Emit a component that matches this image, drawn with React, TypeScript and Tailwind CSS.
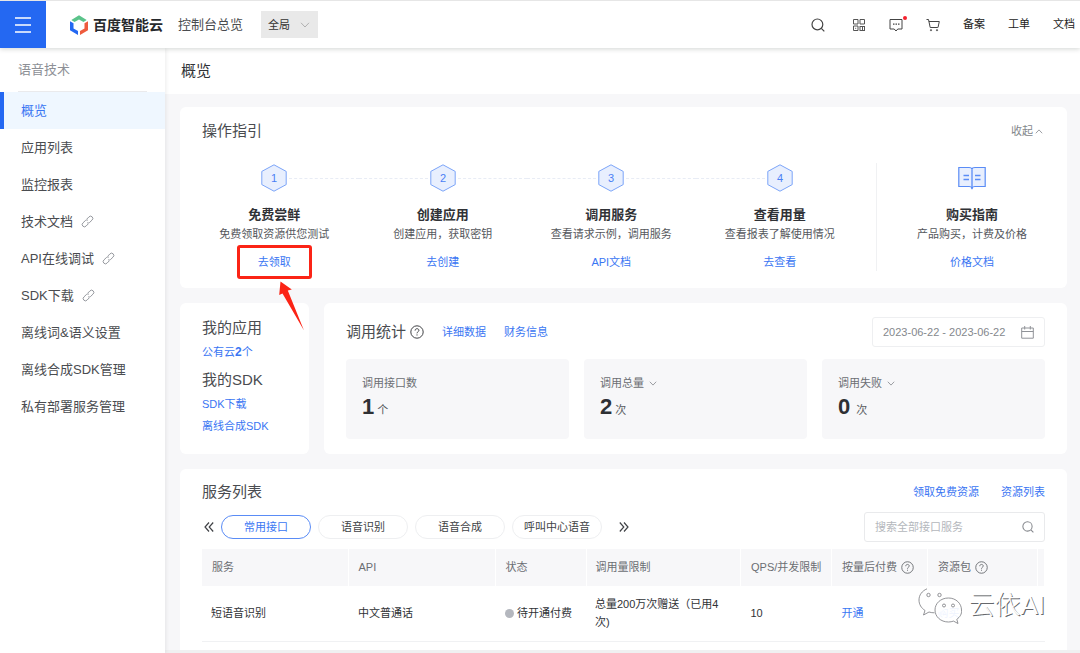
import React from "react";

type Step = { n: number; title: string; desc: string; link: string; highlight?: boolean };

const steps: Step[] = [
  { n: 1, title: "免费尝鲜", desc: "免费领取资源供您测试", link: "去领取", highlight: true },
  { n: 2, title: "创建应用", desc: "创建应用，获取密钥", link: "去创建" },
  { n: 3, title: "调用服务", desc: "查看请求示例，调用服务", link: "API文档" },
  { n: 4, title: "查看用量", desc: "查看报表了解使用情况", link: "去查看" },
];

const menu = [
  { label: "概览", active: true },
  { label: "应用列表" },
  { label: "监控报表" },
  { label: "技术文档", external: true },
  { label: "API在线调试", external: true },
  { label: "SDK下载", external: true },
  { label: "离线词&语义设置" },
  { label: "离线合成SDK管理" },
  { label: "私有部署服务管理" },
];

const tabs = ["常用接口", "语音识别", "语音合成", "呼叫中心语音"];

function Chevron({ up = false, className = "" }: { up?: boolean; className?: string }) {
  return (
    <svg viewBox="0 0 10 6" className={className} fill="none" stroke="currentColor" strokeWidth="1" aria-hidden="true">
      <path d={up ? "M1 5.2 5 1l4 4.2" : "M1 .8 5 5 9 .8"} />
    </svg>
  );
}

function Search({ className = "" }: { className?: string }) {
  return (
    <svg viewBox="0 0 14 14" className={className} fill="none" stroke="currentColor" strokeWidth="1.2" aria-hidden="true">
      <circle cx="6.4" cy="6.4" r="5.4" />
      <path d="m10.3 10.3 3 3" />
    </svg>
  );
}

function Help({ className = "" }: { className?: string }) {
  return (
    <svg viewBox="0 0 14 14" className={className} fill="none" stroke="currentColor" aria-hidden="true">
      <circle cx="7" cy="7" r="6.2" />
      <path d="M5.1 5.6C5.1 4.4 5.9 3.7 7 3.7s1.9.7 1.9 1.7C8.9 6.7 7 6.8 7 8.3" />
      <path d="M7 9.4v1.1" />
    </svg>
  );
}

function LinkIcon() {
  return (
    <svg viewBox="0 0 14 14" className="size-[13px] text-[#8d9096]" fill="none" stroke="currentColor" strokeLinecap="round" aria-hidden="true">
      <path d="M6.4 4.2 8.6 2a2.4 2.4 0 0 1 3.4 0 2.4 2.4 0 0 1 0 3.4L9.3 8a2.3 2.3 0 0 1-2.3.6" />
      <path d="M7.6 9.8 5.4 12A2.4 2.4 0 0 1 2 12a2.4 2.4 0 0 1 0-3.4L4.7 6A2.3 2.3 0 0 1 7 5.4" />
    </svg>
  );
}

function Header() {
  return (
    <header className="relative z-20 flex h-12 items-center border-t border-[#e6e6e6] bg-white shadow-[0_1px_5px_rgba(0,20,10,0.18)]">
      <button type="button" aria-label="菜单" className="flex h-full w-[46px] shrink-0 items-center justify-center bg-[#2468f2] text-white">
        <svg viewBox="0 0 16 16" className="size-4" stroke="currentColor" strokeWidth="1.7" aria-hidden="true">
          <path d="M0 1h16M0 8h16M0 15h16" />
        </svg>
      </button>
      <a href="#home" className="ml-6 flex shrink-0 items-center gap-[5px] text-sm font-bold text-[#26282c]">
        <svg viewBox="0 0 18 20" className="h-5 w-[18px]" aria-hidden="true">
          <path d="M1.3 4.9 9 .3l7.7 4.6-3.2 2L9 4.4 4.5 6.900z" fill="#5ac38a" />
          <path d="M0 6.2 3.5 8.3v5.2L8 16v4L0 15.200z" fill="#2468f2" />
          <path d="m18 6.2-3.5 2.1v5.2L10 16v4l8-4.800z" fill="#ee5b3d" />
        </svg>
        <span>百度智能云</span>
      </a>
      <a href="#console" className="ml-[15px] shrink-0 text-[13px] text-[#4a4c50]">控制台总览</a>
      <label className="relative ml-[18px] shrink-0">
        <span className="sr-only">区域</span>
        <select className="block h-[27px] w-[57px] appearance-none bg-[#e9e9e9] pl-[7px] text-[11px] leading-[18px] text-[#333]">
          <option>全局</option>
        </select>
        <Chevron className="pointer-events-none absolute top-[11px] right-2 h-[6px] w-[10px] text-[#b0b0b0]" />
      </label>
      <nav className="ml-auto flex shrink-0 items-center gap-[23px] pr-[5px] text-[11px] text-[#222]">
        <button type="button" aria-label="搜索" className="mr-1">
          <Search className="block size-[14px] text-[#444]" />
        </button>
        <button type="button" aria-label="应用">
          <svg viewBox="0 0 14 14" className="block size-[14px] text-[#555]" fill="none" stroke="currentColor" aria-hidden="true">
            <path d="M1.5 1.5h4.5v4.5h-4.5zM8 1.5h4.5v4.5H8zM1.5 8h4.5v4.5h-4.5zM8 8v5M8 8.5h5M10.5 8.5v4.5M12.5 8.5v4.5M8 12.5h5M3.2 10.3h1" />
          </svg>
        </button>
        <button type="button" aria-label="消息" className="relative">
          <svg viewBox="0 0 14 14" className="block size-[14px] text-[#444]" fill="none" stroke="currentColor" aria-hidden="true">
            <path d="M1 1.5h12v9.5H8.8l-1.8 2-1.800-2H1z" />
            <path d="M4 6.2h1.5M6.5 6.2H8M9 6.2h1.5" strokeWidth="1.3" />
          </svg>
          <span className="absolute -top-[2px] -right-[4px] size-1 rounded-full bg-[#f5222d]" />
        </button>
        <button type="button" aria-label="购物车">
          <svg viewBox="0 0 14 14" className="block size-[14px] text-[#444]" fill="none" stroke="currentColor" aria-hidden="true">
            <path d="M.5 1.5h2l1.7 8h7.6M2.900 3.500h10.400l-1.300 6" />
            <circle cx="5" cy="12.2" r=".6" />
            <circle cx="11" cy="12.2" r=".6" />
          </svg>
        </button>
        <a href="#beian">备案</a>
        <a href="#ticket">工单</a>
        <a href="#docs">文档</a>
      </nav>
    </header>
  );
}

function Sidebar() {
  return (
    <aside className="relative z-10 w-[165px] shrink-0 bg-white text-[13px] text-[#4a4c50] shadow-[1px_0_4px_rgba(0,0,0,0.08)]">
      <div className="mx-[18px] flex h-11 items-center border-b border-[#eaeaec] text-[#8d9096]">语音技术</div>
      <nav>
        {menu.map((m) => (
          <a
            key={m.label}
            href="#menu"
            className={
              m.active
                ? "flex h-[37px] items-center border-l-4 border-[#2468f2] bg-[#eff7ff] pl-[17px] text-[#3a76f3]"
                : "flex h-[37px] items-center gap-2 pl-[21px]"
            }
          >
            <span>{m.label}</span>
            {m.external && <LinkIcon />}
          </a>
        ))}
      </nav>
    </aside>
  );
}

function Guide() {
  return (
    <section className="rounded-md bg-white pt-3 pb-[17px]">
      <div className="flex items-center justify-between pr-6 pl-[22px]">
        <h2 className="text-[15px] leading-6 text-[#4a4c50]">操作指引</h2>
        <button type="button" className="flex items-center gap-[2px] text-[11px] text-[#84878c]">
          收起
          <Chevron up className="h-[5px] w-2" />
        </button>
      </div>
      <div className="mt-5 flex text-center text-[11px] leading-[18px]">
        <ol className="grid flex-1 grid-cols-4 pt-px pr-3 pl-[10px]">
          {steps.map((s, i) => (
            <li key={s.n}>
              <div className="flex items-center gap-[2px]">
                <span className={i === 0 ? "flex-1" : "flex-1 border-t border-dashed border-[#e8ecf5]"} />
                <svg viewBox="0 0 26 28" className="h-7 w-[26px]" aria-hidden="true">
                  <path d="M13 .8 25.2 7.4v13.2L13 27.2.8 20.6V7.400z" fill="#e8effe" stroke="#7ba4f8" />
                  <text x="13" y="18" textAnchor="middle" fontSize="11" fill="#4a7ff5">{s.n}</text>
                </svg>
                <span className={i === steps.length - 1 ? "flex-1" : "flex-1 border-t border-dashed border-[#e8ecf5]"} />
              </div>
              <h3 className="mt-[13px] text-[13px] leading-5 font-bold text-[#303236]">{s.title}</h3>
              <p className="text-[#55575c]">{s.desc}</p>
              <div className="relative mx-auto mt-[10px] w-fit">
                <a href="#step" className="text-[#3a76f3]">{s.link}</a>
                {s.highlight && (
                  <>
                    <span className="pointer-events-none absolute -inset-x-[21px] -inset-y-2 rounded-[3px] border-[3px] border-[#fb2416]" />
                    <svg viewBox="0 0 28 54" className="pointer-events-none absolute top-[27px] left-5 z-10 h-[54px] w-7" aria-hidden="true">
                      <path d="M2.5 1.5 13.8 9.5 9.8 10.5 26 50.5 4.5 13.5 1.2 15z" fill="#fb2416" />
                    </svg>
                  </>
                )}
              </div>
            </li>
          ))}
        </ol>
        <div className="w-[191px] border-l border-[#f0f1f3] pt-px">
          <div className="flex h-7 items-center justify-center">
            <svg viewBox="0 0 28 24" className="h-6 w-7" fill="#e8effe" stroke="#5a8cf6" aria-hidden="true">
              <path d="M.8 1.500H11q3 0 3 2 0-2 3-2h10.200v19H17q-2.500 0-3 1.500-.5-1.500-3-1.500H.8z" strokeWidth="1.2" />
              <path d="M14 3.500V23M5.500 9.500H11M5.500 13.500H11M17 9.500h5.500M17 13.500h5.500" strokeWidth="1.3" />
            </svg>
          </div>
          <h3 className="mt-[13px] text-[13px] leading-5 font-bold text-[#303236]">购买指南</h3>
          <p className="text-[#55575c]">产品购买，计费及价格</p>
          <a href="#price" className="mt-[10px] inline-block text-[#3a76f3]">价格文档</a>
        </div>
      </div>
    </section>
  );
}

function MyApps() {
  return (
    <section className="w-[129px] shrink-0 rounded-md bg-white px-[22px] pt-[13px] pb-4 text-[11px] leading-[22px] text-[#3a76f3]">
      <h2 className="text-[15px] leading-6 text-[#4a4c50]">我的应用</h2>
      <a href="#apps" className="block pt-px">公有云<b className="text-xs">2</b>个</a>
      <h2 className="mt-[5px] text-[15px] leading-6 text-[#4a4c50]">我的SDK</h2>
      <a href="#sdk" className="block pt-px">SDK下载</a>
      <a href="#offline" className="block">离线合成SDK</a>
    </section>
  );
}

function Stat({ label, value, unit, menu: hasMenu = false, spaced = false }: { label: string; value: string; unit: string; menu?: boolean; spaced?: boolean }) {
  return (
    <div className="h-20 flex-1 rounded-sm bg-[#f7f7f9] px-4 pt-[15px]">
      <div className="flex items-center gap-[5px] text-[11px] leading-[18px] text-[#6b6e73]">
        {label}
        {hasMenu && <Chevron className="h-[5px] w-2 text-[#84878c]" />}
      </div>
      <div className={spaced ? "flex items-baseline gap-[6px]" : "flex items-baseline gap-[3px]"}>
        <strong className="text-[22px] leading-[30px] text-[#2e3034]">{value}</strong>
        <span className="text-[11px] text-[#55575c]">{unit}</span>
      </div>
    </div>
  );
}

function Stats() {
  return (
    <section className="flex-1 rounded-md bg-white px-[22px] pt-[14px] pb-[15px]">
      <div className="flex items-center">
        <h2 className="text-[15px] leading-6 text-[#4a4c50]">调用统计</h2>
        <Help className="ml-1 size-[14px] text-[#404246]" />
        <a href="#detail" className="ml-[18px] text-[11px] text-[#3a76f3]">详细数据</a>
        <a href="#finance" className="ml-[18px] text-[11px] text-[#3a76f3]">财务信息</a>
        <div className="ml-auto flex h-[30px] w-[173px] items-center rounded-[3px] border border-[#eeeff1] px-[10px]">
          <input aria-label="日期范围" readOnly value="2023-06-22 - 2023-06-22" className="h-full w-full min-w-0 flex-1 text-[11px] text-[#85888d] outline-none" />
          <svg viewBox="0 0 13 13" className="size-[13px] text-[#909398]" fill="none" stroke="currentColor" aria-hidden="true">
            <path d="M.7 2h11.6v10.200H.7zM.7 5.500h11.600M3.700 0v3.500M9.300 0v3.500" />
          </svg>
        </div>
      </div>
      <div className="mt-3 flex gap-[15px]">
        <Stat label="调用接口数" value="1" unit="个" />
        <Stat label="调用总量" value="2" unit="次" menu />
        <Stat label="调用失败" value="0" unit="次" menu spaced />
      </div>
    </section>
  );
}

function DoubleArrow({ right = false }: { right?: boolean }) {
  return (
    <svg viewBox="0 0 10 10" className="block size-[10px]" fill="none" stroke="#404246" strokeWidth="1.2" aria-hidden="true">
      <path d={right ? "m.8.5 4 4.5-4 4.5M5 .5l4 4.5-4 4.5" : "M5 .5 1 5l4 4.5M9.2.5 5.2 5l4 4.5"} />
    </svg>
  );
}

function Watermark() {
  return (
    <div className="pointer-events-none absolute right-[22px] bottom-[26px] flex items-center gap-[6px]" aria-hidden="true">
      <svg viewBox="0 0 44 38" className="h-[38px] w-11" fill="#fff" fillOpacity=".85" stroke="#77797d" strokeWidth=".8">
        <path d="M16 1C7.5 1 1 6.5 1 14c0 4.5 2.3 8 6 10.5L5.5 29l5.500-3c2 .6 3.500.8 5.500.8C25 26.8 31.5 21 31.5 14S24.5 1 16 1z" stroke="none" />
        <path d="M9 2.800C4 5 1 9 1 14c0 4.500 2.300 8 6 10.500L5.500 29l5.500-3c2 .6 3.500.8 5.500.8" />
        <path d="M30.500 12C22.500 12 17 17.500 17 24s5.500 12 13.500 12c1.800 0 3.500-.4 5-.9L40 37.500l-1.200-4.200C42 31 44 28 43.500 24 43.500 17.500 38 12 30.500 12z" />
        <circle cx="10.5" cy="9" r="1.7" />
        <circle cx="21.5" cy="9" r="1.7" />
        <circle cx="26" cy="19.5" r="1.5" />
        <circle cx="35" cy="19.5" r="1.5" />
      </svg>
      <span className="text-[26px] leading-8 font-light text-white [text-shadow:1px_1px_0_#66686c]">云依AI</span>
    </div>
  );
}

function Services() {
  return (
    <section className="relative rounded-t-md bg-white px-[22px] pt-[11px] pb-2 text-[11px]">
      <div className="flex items-center gap-[22px] text-[#3a76f3]">
        <h2 className="mr-auto text-[15px] leading-6 text-[#4a4c50]">服务列表</h2>
        <a href="#free">领取免费资源</a>
        <a href="#resources">资源列表</a>
      </div>
      <div className="mt-2 flex items-center">
        <div className="flex items-center gap-[7px] pl-[2px]">
          <button type="button" aria-label="上一页"><DoubleArrow /></button>
          {tabs.map((t, i) => (
            <button
              key={t}
              type="button"
              className={
                i === 0
                  ? "h-6 w-[90px] rounded-full border border-[#5a8cf6] text-[#3a76f3]"
                  : "h-6 w-[90px] rounded-full border border-[#eeeff1] text-[#404246]"
              }
            >
              {t}
            </button>
          ))}
          <button type="button" aria-label="下一页" className="pl-[10px]"><DoubleArrow right /></button>
        </div>
        <label className="ml-auto flex h-[30px] w-[181px] items-center rounded-[3px] border border-[#e9eaec] px-[10px]">
          <span className="sr-only">搜索</span>
          <input placeholder="搜索全部接口服务" className="h-full w-full min-w-0 flex-1 outline-none placeholder:text-[#b4b7bc]" />
          <Search className="size-3 text-[#84878c]" />
        </label>
      </div>
      <table className="mt-[7px] w-full table-fixed border-collapse text-left">
        <colgroup>
          <col className="w-[146px]" />
          <col className="w-[147px]" />
          <col className="w-[91px]" />
          <col />
          <col className="w-[91px]" />
          <col className="w-[96px]" />
          <col className="w-[110px]" />
          <col className="w-[7px]" />
        </colgroup>
        <thead>
          <tr className="h-[37px] bg-[#f7f7f9] text-[#6b6e73] *:border-r *:border-white *:font-normal *:whitespace-nowrap">
            <th className="px-[10px]">服务</th>
            <th className="px-[10px]">API</th>
            <th className="px-[10px]">状态</th>
            <th className="px-[9px]">调用量限制</th>
            <th className="pl-[10px]">QPS/并发限制</th>
            <th className="pl-[10px]"><span className="flex items-center gap-1">按量后付费<Help className="size-[13px]" /></span></th>
            <th className="pl-[10px]"><span className="flex items-center gap-1">资源包<Help className="size-[13px]" /></span></th>
            <td />
          </tr>
        </thead>
        <tbody>
          <tr className="h-[55px] border-b border-[#f0f1f3] leading-[18px] text-[#303236]">
            <td className="px-[9px]">短语音识别</td>
            <td className="px-[10px]">中文普通话</td>
            <td className="pl-[10px] whitespace-nowrap">
              <span className="flex items-center gap-[3px]"><i className="size-[9px] rounded-full bg-[#b4b7be]" />待开通付费</span>
            </td>
            <td className="px-[9px]">总量200万次赠送（已用4次)</td>
            <td className="px-[10px]">10</td>
            <td className="px-[10px]"><a href="#open" className="text-[#3a76f3]">开通</a></td>
            <td className="px-[10px]"><a href="#buy" className="text-[#8fb2f9]">购买</a></td>
            <td />
          </tr>
        </tbody>
      </table>
      <Watermark />
    </section>
  );
}

export default function App() {
  return (
    <div className="flex min-h-screen flex-col bg-[#f7f7f9] font-['Liberation_Sans','Noto_Sans_CJK_SC',sans-serif]">
      <Header />
      <div className="flex flex-1">
        <Sidebar />
        <main className="flex min-w-0 flex-1 flex-col">
          <h1 className="flex h-[46px] items-center bg-white pl-4 text-[15px] text-[#303236]">概览</h1>
          <div className="flex flex-col gap-[15px] pt-[13px] pr-[13px] pl-[15px]">
            <Guide />
            <div className="flex gap-[15px]">
              <MyApps />
              <Stats />
            </div>
            <Services />
          </div>
          <div className="min-h-[3px] flex-1 bg-[#f0f0f1]" />
        </main>
      </div>
    </div>
  );
}
